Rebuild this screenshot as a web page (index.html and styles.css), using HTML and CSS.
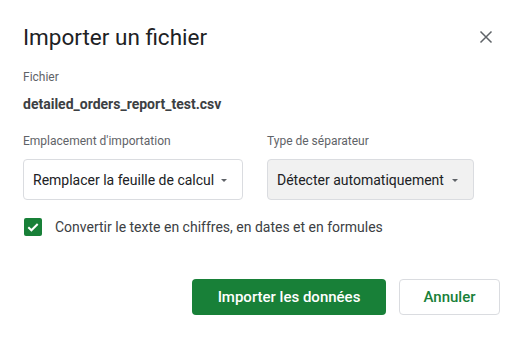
FILE: index.html
```html
<!DOCTYPE html>
<html lang="fr">
<head>
    <meta charset="UTF-8">
    <meta name="viewport" content="width=device-width, initial-scale=1.0">
    <title>Importer un fichier</title>
    <link rel="stylesheet" href="styles.css">
</head>
<body>
<div class="dialog">
    <div class="dialog-header">
        <h1>Importer un fichier</h1>
        <button class="close-btn" aria-label="Fermer">
            <svg width="14" height="14" viewBox="0 0 14 14">
                <path d="M1.5 1.5L12.5 12.5M12.5 1.5L1.5 12.5" stroke="#5f6368" stroke-width="1.5" fill="none"/>
            </svg>
        </button>
    </div>

    <div class="file-info">
        <div class="field-label">Fichier</div>
        <div class="file-name">detailed_orders_report_test.csv</div>
    </div>

    <div class="options">
        <div class="option option-location">
            <div class="field-label">Emplacement d'importation</div>
            <div class="select">
                <span>Remplacer la feuille de calcul</span>
                <span class="caret"></span>
            </div>
        </div>
        <div class="option option-separator">
            <div class="field-label">Type de séparateur</div>
            <div class="select select-filled">
                <span>Détecter automatiquement</span>
                <span class="caret"></span>
            </div>
        </div>
    </div>

    <label class="checkbox-row">
        <span class="checkbox">
            <svg width="18" height="18" viewBox="0 0 18 18">
                <path d="M4.3 9.3L7.4 12.3L13.7 6" stroke="#fff" stroke-width="2" fill="none"/>
            </svg>
        </span>
        <span>Convertir le texte en chiffres, en dates et en formules</span>
    </label>

    <div class="actions">
        <button class="btn btn-primary">Importer les données</button>
        <button class="btn btn-secondary">Annuler</button>
    </div>
</div>
</body>
</html>
```

FILE: styles.css
```css
body {
    margin: 0;
    font-family: 'Roboto', 'Liberation Sans', sans-serif;
    background-color: #fff;
    color: #202124;
}

.dialog {
    width: 526px;
    height: 337px;
    box-sizing: border-box;
    padding: 21px 26px 0 23px;
    background-color: #fff;
}

.dialog-header {
    display: flex;
    justify-content: space-between;
    align-items: center;
    height: 32px;
}

.dialog-header h1 {
    margin: 0;
    font-size: 22.5px;
    line-height: 31px;
    font-weight: 400;
    color: #202124;
}

.close-btn {
    border: none;
    background: none;
    padding: 0;
    margin-right: 7px;
    width: 14px;
    height: 14px;
    display: flex;
}

.file-info {
    margin-top: 16px;
}

.field-label {
    font-size: 12px;
    line-height: 16px;
    color: #5f6368;
}

.file-name {
    margin-top: 9px;
    font-size: 14px;
    line-height: 20px;
    font-weight: 700;
    color: #3c4043;
}

.options {
    display: flex;
    gap: 24px;
    margin-top: 19px;
}

.option .field-label {
    margin-bottom: 10px;
}

.option-location .select {
    width: 220px;
}

.option-separator .select {
    width: 207px;
}

.select {
    display: flex;
    justify-content: space-between;
    align-items: center;
    box-sizing: border-box;
    height: 41px;
    padding: 0 15px 0 9px;
    border: 1px solid #dadce0;
    border-radius: 4px;
    font-size: 14px;
    white-space: nowrap;
    color: #202124;
}

.select-filled {
    background-color: #f1f1f1;
}

.caret {
    width: 0;
    height: 0;
    margin-top: 1px;
    border-left: 3.5px solid transparent;
    border-right: 3.5px solid transparent;
    border-top: 3.5px solid #5f6368;
}

.checkbox-row {
    display: flex;
    align-items: center;
    gap: 13px;
    margin-top: 18px;
    padding-left: 1px;
    font-size: 14px;
    color: #3c4043;
}

.checkbox {
    width: 18px;
    height: 18px;
    border-radius: 2px;
    background-color: #188038;
    display: flex;
}

.actions {
    display: flex;
    justify-content: flex-end;
    gap: 13px;
    margin-top: 43px;
}

.btn {
    height: 36px;
    box-sizing: border-box;
    border-radius: 4px;
    font-family: inherit;
    font-size: 15px;
    font-weight: 500;
    cursor: pointer;
}

.btn-primary {
    width: 194px;
    background-color: #188038;
    border: none;
    color: #fff;
}

.btn-secondary {
    width: 101px;
    background-color: #fff;
    border: 1px solid #dadce0;
    color: #188038;
}
```
